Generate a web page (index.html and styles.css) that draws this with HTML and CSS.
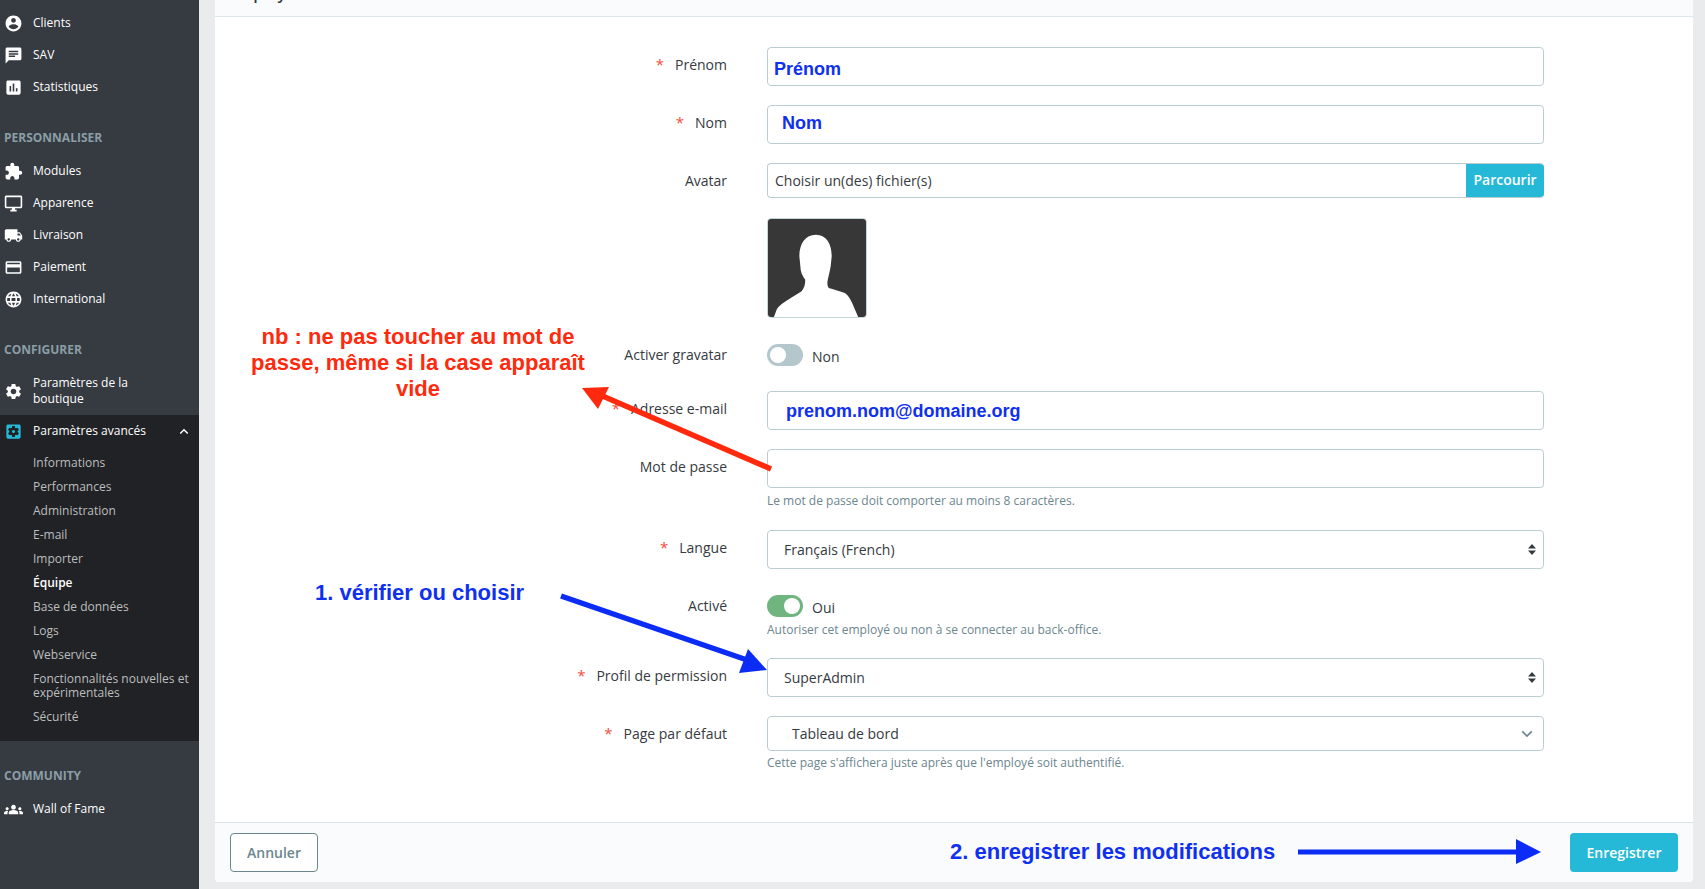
FILE: index.html
```html
<!DOCTYPE html>
<html lang="fr">
<head>
<meta charset="utf-8">
<title>Employés</title>
<link rel="stylesheet" href="styles.css">
</head>
<body>
<div class="app">
  <nav class="sidebar">
    <a class="nav-item"><svg class="nav-icon" viewBox="0 0 24 24"><path d="M12 2C6.48 2 2 6.48 2 12s4.48 10 10 10 10-4.48 10-10S17.52 2 12 2zm0 3c1.66 0 3 1.34 3 3s-1.34 3-3 3-3-1.34-3-3 1.34-3 3-3zm0 14.2c-2.5 0-4.71-1.28-6-3.22.03-1.99 4-3.08 6-3.08 1.99 0 5.97 1.09 6 3.08-1.29 1.94-3.5 3.22-6 3.22z"/></svg><span>Clients</span></a>
    <a class="nav-item"><svg class="nav-icon" viewBox="0 0 24 24"><path d="M20 2H4c-1.1 0-1.99.9-1.99 2L2 22l4-4h14c1.1 0 2-.9 2-2V4c0-1.1-.9-2-2-2zM6 9h12v2H6V9zm8 5H6v-2h8v2zm4-6H6V6h12v2z"/></svg><span>SAV</span></a>
    <a class="nav-item"><svg class="nav-icon" viewBox="0 0 24 24"><path d="M19 3H5c-1.1 0-2 .9-2 2v14c0 1.1.9 2 2 2h14c1.1 0 2-.9 2-2V5c0-1.1-.9-2-2-2zM9 17H7v-7h2v7zm4 0h-2V7h2v10zm4 0h-2v-4h2v4z"/></svg><span>Statistiques</span></a>

    <div class="nav-title">PERSONNALISER</div>
    <a class="nav-item"><svg class="nav-icon" viewBox="0 0 24 24"><path d="M20.5 11H19V7c0-1.1-.9-2-2-2h-4V3.5C13 2.12 11.88 1 10.5 1S8 2.12 8 3.5V5H4c-1.1 0-1.99.9-1.99 2v3.8H3.5c1.49 0 2.7 1.21 2.7 2.7s-1.21 2.7-2.7 2.7H2V20c0 1.1.9 2 2 2h3.8v-1.5c0-1.49 1.21-2.7 2.7-2.7 1.49 0 2.7 1.21 2.7 2.7V22H17c1.1 0 2-.9 2-2v-4h1.5c1.38 0 2.5-1.12 2.5-2.5S21.88 11 20.5 11z"/></svg><span>Modules</span></a>
    <a class="nav-item"><svg class="nav-icon" viewBox="0 0 24 24"><path d="M21 2H3c-1.1 0-2 .9-2 2v12c0 1.1.9 2 2 2h7v2H8v2h8v-2h-2v-2h7c1.1 0 2-.9 2-2V4c0-1.1-.9-2-2-2zm0 14H3V4h18v12z"/></svg><span>Apparence</span></a>
    <a class="nav-item"><svg class="nav-icon" viewBox="0 0 24 24"><path d="M20 8h-3V4H3c-1.1 0-2 .9-2 2v11h2c0 1.66 1.34 3 3 3s3-1.34 3-3h6c0 1.66 1.34 3 3 3s3-1.34 3-3h2v-5l-3-4zM6 18.5c-.83 0-1.5-.67-1.5-1.5s.67-1.5 1.5-1.5 1.5.67 1.5 1.5-.67 1.5-1.5 1.5zm13.5-9l1.96 2.5H17V9.5h2.5zm-1.5 9c-.83 0-1.5-.67-1.5-1.5s.67-1.5 1.5-1.5 1.5.67 1.5 1.5-.67 1.5-1.5 1.5z"/></svg><span>Livraison</span></a>
    <a class="nav-item"><svg class="nav-icon" viewBox="0 0 24 24"><path d="M20 4H4c-1.11 0-1.99.89-1.99 2L2 18c0 1.11.89 2 2 2h16c1.11 0 2-.89 2-2V6c0-1.11-.89-2-2-2zm0 14H4v-6h16v6zm0-10H4V6h16v2z"/></svg><span>Paiement</span></a>
    <a class="nav-item"><svg class="nav-icon" viewBox="0 0 24 24"><path d="M11.99 2C6.47 2 2 6.48 2 12s4.47 10 9.99 10C17.52 22 22 17.52 22 12S17.52 2 11.99 2zm6.93 6h-2.95c-.32-1.25-.78-2.45-1.38-3.56 1.84.63 3.37 1.91 4.33 3.56zM12 4.04c.83 1.2 1.48 2.53 1.91 3.96h-3.82c.43-1.43 1.08-2.76 1.91-3.96zM4.26 14C4.1 13.36 4 12.69 4 12s.1-1.36.26-2h3.38c-.08.66-.14 1.32-.14 2 0 .68.06 1.34.14 2H4.26zm.82 2h2.95c.32 1.25.78 2.45 1.38 3.56-1.84-.63-3.37-1.9-4.33-3.56zm2.95-8H5.08c.96-1.66 2.49-2.93 4.33-3.56C8.81 5.55 8.35 6.75 8.03 8zM12 19.96c-.83-1.2-1.48-2.53-1.91-3.96h3.82c-.43 1.43-1.08 2.76-1.91 3.96zM14.34 14H9.66c-.09-.66-.16-1.32-.16-2 0-.68.07-1.35.16-2h4.68c.09.65.16 1.32.16 2 0 .68-.07 1.34-.16 2zm.25 5.56c.6-1.11 1.06-2.31 1.38-3.56h2.95c-.96 1.65-2.49 2.93-4.33 3.56zM16.36 14c.08-.66.14-1.32.14-2 0-.68-.06-1.34-.14-2h3.38c.16.64.26 1.31.26 2s-.1 1.36-.26 2h-3.38z"/></svg><span>International</span></a>

    <div class="nav-title">CONFIGURER</div>
    <a class="nav-item nav-item-tall"><svg class="nav-icon" viewBox="0 0 24 24"><path d="M19.14 12.94c.04-.3.06-.61.06-.94 0-.32-.02-.64-.07-.94l2.03-1.58c.18-.14.23-.41.12-.61l-1.92-3.32c-.12-.22-.37-.29-.59-.22l-2.39.96c-.5-.38-1.03-.7-1.62-.94l-.36-2.54c-.04-.24-.24-.41-.48-.41h-3.84c-.24 0-.43.17-.47.41l-.36 2.54c-.59.24-1.13.57-1.62.94l-2.39-.96c-.22-.08-.47 0-.59.22L2.74 8.87c-.12.21-.08.47.12.61l2.03 1.58c-.05.3-.09.63-.09.94s.02.64.07.94l-2.03 1.58c-.18.14-.23.41-.12.61l1.92 3.32c.12.22.37.29.59.22l2.39-.96c.5.38 1.03.7 1.62.94l.36 2.54c.05.24.24.41.48.41h3.84c.24 0 .44-.17.47-.41l.36-2.54c.59-.24 1.13-.56 1.62-.94l2.39.96c.22.08.47 0 .59-.22l1.92-3.32c.12-.22.07-.47-.12-.61l-2.01-1.58zM12 15.6c-1.98 0-3.6-1.62-3.6-3.6s1.62-3.6 3.6-3.6 3.6 1.62 3.6 3.6-1.62 3.6-3.6 3.6z"/></svg><span>Paramètres de la<br>boutique</span></a>
    <div class="nav-open">
      <a class="nav-item"><svg class="nav-icon nav-icon-active" viewBox="0 0 24 24"><path d="M12 10c-1.1 0-2 .9-2 2s.9 2 2 2 2-.9 2-2-.9-2-2-2zm7-7H5c-1.11 0-2 .9-2 2v14c0 1.1.89 2 2 2h14c1.11 0 2-.9 2-2V5c0-1.1-.89-2-2-2zm-1.75 9c0 .23-.02.46-.05.68l1.48 1.16c.13.11.17.3.08.45l-1.4 2.42c-.09.15-.27.21-.43.15l-1.74-.7c-.36.28-.76.51-1.18.69l-.26 1.85c-.03.17-.18.3-.35.3h-2.8c-.17 0-.32-.13-.35-.29l-.26-1.85c-.43-.18-.82-.41-1.18-.69l-1.74.7c-.16.06-.34 0-.43-.15l-1.4-2.42c-.09-.15-.05-.34.08-.45l1.48-1.16c-.03-.23-.05-.46-.05-.69 0-.23.02-.46.05-.68l-1.48-1.16c-.13-.11-.17-.3-.08-.45l1.4-2.42c.09-.15.27-.21.43-.15l1.74.7c.36-.28.76-.51 1.18-.69l.26-1.85c.03-.17.18-.3.35-.3h2.8c.17 0 .32.13.35.29l.26 1.85c.43.18.82.41 1.18.69l1.74-.7c.16-.06.34 0 .43.15l1.4 2.42c.09.15.05.34-.08.45l-1.48 1.16c.03.23.05.46.05.69z"/></svg><span class="nav-grow">Paramètres avancés</span><svg class="nav-caret" viewBox="0 0 12 8"><path d="M1.5 6.5 6 2l4.5 4.5" fill="none" stroke="#fff" stroke-width="1.8"/></svg></a>
      <ul class="sub">
        <li>Informations</li>
        <li>Performances</li>
        <li>Administration</li>
        <li>E-mail</li>
        <li>Importer</li>
        <li class="sub-current">Équipe</li>
        <li>Base de données</li>
        <li>Logs</li>
        <li>Webservice</li>
        <li class="sub-long">Fonctionnalités nouvelles et<br>expérimentales</li>
        <li>Sécurité</li>
      </ul>
    </div>

    <div class="nav-title">COMMUNITY</div>
    <a class="nav-item"><svg class="nav-icon" viewBox="0 0 24 24"><path d="M12 12.75c1.63 0 3.07.39 4.24.9 1.08.48 1.76 1.56 1.76 2.73V18H6v-1.61c0-1.18.68-2.26 1.76-2.73 1.17-.52 2.61-.91 4.24-.91zM4 13c1.1 0 2-.9 2-2s-.9-2-2-2-2 .9-2 2 .9 2 2 2zm1.13 1.1C4.76 14.04 4.39 14 4 14c-.99 0-1.93.21-2.78.58C.48 14.9 0 15.62 0 16.43V18h4.5v-1.61c0-.83.23-1.61.63-2.29zM20 13c1.1 0 2-.9 2-2s-.9-2-2-2-2 .9-2 2 .9 2 2 2zm4 3.43c0-.81-.48-1.53-1.22-1.85-.85-.37-1.79-.58-2.78-.58-.39 0-.76.04-1.13.1.4.68.63 1.46.63 2.29V18H24v-1.57zM12 6c1.66 0 3 1.34 3 3s-1.34 3-3 3-3-1.34-3-3 1.34-3 3-3z"/></svg><span>Wall of Fame</span></a>
  </nav>

  <main class="content">
    <section class="card">
      <header class="card-header"><span class="card-title">Employés</span></header>
      <div class="card-body">
        <div class="row">
          <div class="label"><i class="req">*</i>Prénom</div>
          <div class="control"><div class="field field-tall note-field note-prenom">Prénom</div></div>
        </div>
        <div class="row">
          <div class="label"><i class="req">*</i>Nom</div>
          <div class="control"><div class="field field-tall note-field note-nom">Nom</div></div>
        </div>
        <div class="row">
          <div class="label">Avatar</div>
          <div class="control">
            <div class="file"><span class="file-name">Choisir un(des) fichier(s)</span><span class="file-btn">Parcourir</span></div>
            <svg class="avatar" viewBox="0 0 100 100"><rect width="100" height="100" fill="#373737"/><path fill="#fff" d="M6 100 9 92C12 87 18 84 24 80L34 74C37 71 38 67 38 62 35 58 33 54 33 48L32 38C32 25 38 16 49 16 60 16 65 26 65 38L64 48C63 54 62 58 61 62 60 67 61 71 64 71L77 75C82 77 84 82 86 86L92 100Z"/></svg>
          </div>
        </div>
        <div class="row row-min">
          <div class="label">Activer gravatar</div>
          <div class="control control-switch"><span class="switch"><span class="knob"></span></span><span class="switch-text">Non</span></div>
        </div>
        <div class="row">
          <div class="label"><i class="req">*</i>Adresse e-mail</div>
          <div class="control"><div class="field field-tall note-field note-mail">prenom.nom@domaine.org</div></div>
        </div>
        <div class="row">
          <div class="label">Mot de passe</div>
          <div class="control">
            <div class="field field-tall"></div>
            <p class="help">Le mot de passe doit comporter au moins 8 caractères.</p>
          </div>
        </div>
        <div class="row">
          <div class="label"><i class="req">*</i>Langue</div>
          <div class="control">
            <div class="field field-tall select"><span>Français (French)</span><svg class="updown" viewBox="0 0 8 11"><path fill="#363a41" d="M4 0 8 4.5H0zM4 11 0 6.5h8z"/></svg></div>
          </div>
        </div>
        <div class="row">
          <div class="label">Activé</div>
          <div class="control control-stack">
            <div class="switch-line"><span class="switch switch-on"><span class="knob"></span></span><span class="switch-text">Oui</span></div>
            <p class="help help-tight">Autoriser cet employé ou non à se connecter au back-office.</p>
          </div>
        </div>
        <div class="row">
          <div class="label"><i class="req">*</i>Profil de permission</div>
          <div class="control">
            <div class="field field-tall select"><span>SuperAdmin</span><svg class="updown" viewBox="0 0 8 11"><path fill="#363a41" d="M4 0 8 4.5H0zM4 11 0 6.5h8z"/></svg></div>
          </div>
        </div>
        <div class="row">
          <div class="label"><i class="req">*</i>Page par défaut</div>
          <div class="control">
            <div class="field select select-page"><span>Tableau de bord</span><svg class="chevron" viewBox="0 0 14 9"><path d="M1.5 1.5 7 7l5.5-5.5" fill="none" stroke="#6c868e" stroke-width="2"/></svg></div>
            <p class="help help-page">Cette page s'affichera juste après que l'employé soit authentifié.</p>
          </div>
        </div>
      </div>
      <footer class="card-footer">
        <button class="btn btn-outline">Annuler</button>
        <button class="btn btn-primary">Enregistrer</button>
      </footer>
    </section>
  </main>

  <svg class="arrows" viewBox="0 0 1705 889" width="1705" height="889">
    <path d="M771 469 598 394" stroke="#ff2a0d" stroke-width="5.5" fill="none"/>
    <path d="M582 388 609 387 598 409Z" fill="#ff2a0d"/>
    <path d="M561 596 750 661" stroke="#0b2cf5" stroke-width="5.5" fill="none"/>
    <path d="M767 670 748 649 739 673Z" fill="#0b2cf5"/>
    <path d="M1298 852H1520" stroke="#0b2cf5" stroke-width="5" fill="none"/>
    <path d="M1541 852 1516 839V864Z" fill="#0b2cf5"/>
  </svg>
  <div class="note note-red">nb : ne pas toucher au mot de<br>passe, même si la case apparaît<br>vide</div>
  <div class="note note-blue note-check">1. vérifier ou choisir</div>
  <div class="note note-blue note-save">2. enregistrer les modifications</div>
</div>
</body>
</html>
```

FILE: styles.css
```css
* { box-sizing: border-box; }
html, body { margin: 0; height: 100%; overflow: hidden; }
body { font-family: "Open Sans", "Noto Sans", sans-serif; font-size: 14px; color: #363a41; background: #eaebec; }

.app { position: relative; display: flex; width: 1705px; height: 889px; overflow: hidden; }

/* Sidebar */
.sidebar { flex: 0 0 199px; background: #363a41; color: #fff; padding-top: 7px; font-size: 12px; line-height: 16px; }
.nav-item { display: flex; align-items: center; height: 32px; padding-left: 4px; color: #fff; }
.nav-item-tall { height: 48px; }
.nav-icon { flex: 0 0 19px; width: 19px; height: 19px; margin-right: 10px; fill: #fff; }
.nav-icon-active { fill: #25b9d7; }
.nav-title { padding: 27px 0 9px 4px; font-weight: 700; color: #8b9ea6; }
.nav-open { background: #202226; padding-bottom: 12px; }
.nav-grow { flex: 1; }
.nav-caret { width: 10px; height: 7px; margin-right: 10px; }
.sub { list-style: none; margin: 0; padding: 4px 0 0 33px; color: #bebebe; }
.sub li { height: 24px; line-height: 24px; white-space: nowrap; }
.sub .sub-current { color: #fff; font-weight: 600; }
.sub .sub-long { height: 38px; padding-top: 5px; line-height: 14px; }

/* Card */
.content { flex: 1; padding: 0 12px 7px 16px; min-width: 0; }
.card { display: flex; flex-direction: column; height: 100%; background: #fff; border-radius: 0 0 4px 4px; }
.card-header { height: 17px; overflow: hidden; background: #fafbfc; border-bottom: 1px solid #dde6e8; padding-left: 14px; }
.card-title { display: block; margin-top: -17px; font-size: 16px; line-height: 20px; font-weight: 600; }
.card-body { flex: 1; padding: 30px 0 0; }
.card-footer { display: flex; justify-content: space-between; align-items: flex-start; height: 60px; padding: 10px 15px 0; background: #fafbfc; border-top: 1px solid #dde2e4; border-radius: 0 0 4px 4px; }

/* Rows */
.row { display: grid; grid-template-columns: 512px 777px; column-gap: 40px; margin-bottom: 19px; }
.row-min { min-height: 35px; }
.label { position: relative; padding-top: 7px; text-align: right; line-height: 21px; }
.req { font-style: normal; color: #f54c3e; margin-right: 11px; font-size: 15px; }
.control-switch { display: flex; align-items: center; height: 22px; margin-top: 7px; }
.control-stack { padding-top: 7px; }
.switch-line { display: flex; align-items: center; height: 22px; }
.switch { position: relative; display: block; flex: 0 0 36px; width: 36px; height: 22px; border-radius: 11px; background: #b3c7cd; }
.switch .knob { position: absolute; top: 3px; left: 3px; width: 16px; height: 16px; border-radius: 50%; background: #fff; }
.switch-on { background: #70b580; }
.switch-on .knob { left: 17px; }
.switch-text { margin-left: 9px; position: relative; top: 1px; }

/* Fields */
.field { display: flex; align-items: center; height: 35px; border: 1px solid #bbcdd2; border-radius: 4px; background: #fff; }
.field-tall { height: 39px; }
.note-field { font-family: "Liberation Sans", Arial, sans-serif; font-size: 18px; font-weight: 700; color: #1030f0; }
.note-prenom { padding: 6px 0 0 6px; }
.note-nom { padding: 0 0 3px 14px; }
.note-mail { padding: 1px 0 0 18px; }
.select { justify-content: space-between; padding: 0 7px 0 16px; }
.select-page { padding: 0 10px 0 24px; }
.updown { width: 8px; height: 11px; }
.chevron { width: 12px; height: 8px; }
.file { display: flex; height: 35px; border: 1px solid #bbcdd2; border-right: 0; border-radius: 4px; overflow: hidden; }
.file-name { flex: 1; padding-left: 7px; line-height: 33px; }
.file-btn { margin: -1px 0; width: 78px; line-height: 33px; text-align: center; background: #25b9d7; color: #fff; font-weight: 600; }
.avatar { display: block; margin-top: 20px; width: 100px; height: 100px; border: 1px solid #c6d5d9; border-radius: 4px; }
.help { margin: 3px 0 0; font-size: 12px; line-height: 20px; color: #6c868e; }
.help-tight { margin-top: 3px; margin-bottom: -1px; }
.help-page { margin-top: 2px; }

/* Buttons */
.btn { height: 39px; border-radius: 4px; font-family: inherit; font-size: 14px; font-weight: 600; }
.btn-outline { width: 88px; background: #fff; border: 1px solid #6c868e; color: #6c868e; }
.btn-primary { width: 108px; background: #25b9d7; border: 0; color: #fff; }

/* Hand-written annotations over the screenshot */
.arrows { position: absolute; top: 0; left: 0; pointer-events: none; }
.note { position: absolute; font-family: "Liberation Sans", Arial, sans-serif; font-weight: 700; font-size: 22px; line-height: 26px; white-space: nowrap; }
.note-red { left: 218px; top: 324px; width: 400px; text-align: center; color: #ff2a0d; }
.note-blue { color: #1030f0; }
.note-check { left: 315px; top: 580px; }
.note-save { left: 950px; top: 839px; }
```
